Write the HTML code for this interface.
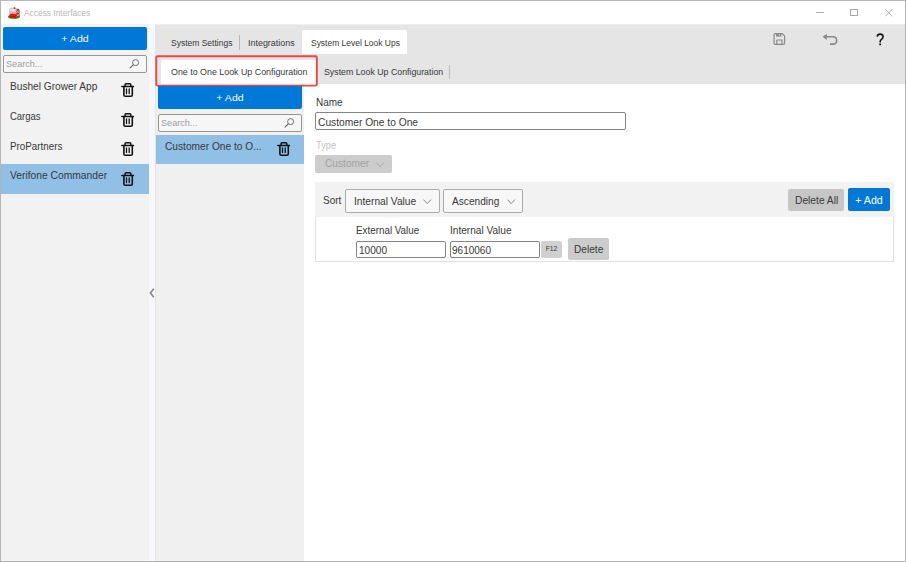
<!DOCTYPE html><html><head><meta charset="utf-8"><style>
html,body{margin:0;padding:0;}
body{width:906px;height:562px;position:relative;overflow:hidden;background:#fff;font-family:"Liberation Sans",sans-serif;}
.r{position:absolute;box-sizing:border-box;}
.t{position:absolute;white-space:nowrap;}
</style></head><body>
<div class="r" style="left:0px;top:0px;width:906px;height:562px;background:#ffffff;"></div>
<div class="r" style="left:1px;top:24px;width:148px;height:537px;background:#f2f2f2;"></div>
<div class="r" style="left:149px;top:24px;width:6px;height:537px;background:#f7f8fc;"></div>
<div class="r" style="left:155px;top:24px;width:1px;height:537px;background:#e3e3e8;"></div>
<div class="r" style="left:156px;top:25px;width:749px;height:59px;background:#e5e5e5;"></div>
<div class="r" style="left:156px;top:24px;width:749px;height:1px;background:#f0f0f0;"></div>
<div class="r" style="left:156px;top:84px;width:148px;height:477px;background:#f0f0f0;"></div>
<div class="r" style="left:304px;top:84px;width:601px;height:477px;background:#ffffff;"></div>
<div class="r" style="left:0px;top:0px;width:906px;height:1px;background:#b9b9b9;"></div>
<div class="r" style="left:0px;top:0px;width:1px;height:562px;background:#b4b4b4;"></div>
<div class="r" style="left:905px;top:0px;width:1px;height:562px;background:#b4b4b4;"></div>
<div class="r" style="left:0px;top:561px;width:906px;height:1px;background:#b4b4b4;"></div>
<svg class="r" style="left:6px;top:4px" width="18" height="18" viewBox="0 0 18 18">
<ellipse cx="8" cy="12.7" rx="6.1" ry="2.1" fill="#0e8a0e"/>
<ellipse cx="8" cy="12.5" rx="5.2" ry="1.4" fill="#19a019"/>
<path d="M10.1 5.2L12.2 4.6L13.6 6V12.6L10.1 13.4Z" fill="#b02525"/>
<path d="M10.5 6.2L13.2 9.2M10.5 9.2L13.2 6.2M10.5 9.8L13.2 12.6M10.5 12.6L13.2 9.8" stroke="#ecc8c8" stroke-width="0.7"/>
<rect x="3.6" y="9.4" width="6.6" height="4.1" fill="#ff1010"/>
<rect x="3.6" y="12.6" width="6.6" height="0.9" fill="#c00000"/>
<path d="M3.1 9.6V5.8Q3.3 3.9 5.4 3.7L10.6 3.9L10.3 9.6Z" fill="#c4c4c4"/>
<path d="M4.1 5.4Q4.6 4.5 6 4.5H9.4V7.4H4.1Z" fill="#e2e2e2"/>
<path d="M5.8 9.1H9.6" stroke="#a89a4a" stroke-width="0.6"/>
<circle cx="8.4" cy="4.1" r="0.95" fill="#e01818"/>
</svg>
<div class="t" style="top:7.53px;font-size:8.6px;line-height:11.18px;color:#b6b6b6;transform:scaleX(0.9757);left:24px;transform-origin:0 0;">Access Interfaces</div>
<div class="r" style="left:816px;top:11.7px;width:8px;height:1.0px;background:#b0b0b0;"></div>
<div class="r" style="left:850.3px;top:9px;width:7.7000000000000455px;height:7.399999999999999px;background:transparent;border:1px solid #a8a8a8;"></div>
<svg class="r" style="left:884.5px;top:9px" width="8" height="8" viewBox="0 0 8 8"><path d="M0.2 0.2L7.4 7.4M7.4 0.2L0.2 7.4" stroke="#a0a0a0" stroke-width="0.8"/></svg>
<div class="r" style="left:3px;top:26.5px;width:143.8px;height:23.5px;background:#0078d7;border-radius:2px;"></div>
<div class="t" style="top:32.83px;font-size:9.9px;line-height:12.87px;color:#ffffff;transform:scaleX(1.0703);left:3px;width:144px;text-align:center;">+ Add</div>
<div class="r" style="left:3px;top:55px;width:144px;height:18px;background:#f6f6f6;border:1px solid #979797;border-radius:2px;"></div>
<div class="t" style="top:58.13px;font-size:9.8px;line-height:12.74px;color:#a0a0a0;transform:scaleX(0.9286);left:5.8px;transform-origin:0 0;">Search...</div>
<svg class="r" style="left:128.5px;top:59px" width="11" height="10" viewBox="0 0 11 10"><circle cx="6.6" cy="3.6" r="3" fill="none" stroke="#626262" stroke-width="0.9"/><path d="M4.5 5.7L0.7 9.4" stroke="#626262" stroke-width="1.1"/></svg>
<div class="r" style="left:1px;top:164px;width:148px;height:30px;background:#91c0e7;"></div>
<div class="t" style="top:80.04px;font-size:10.3px;line-height:13.39px;color:#383838;transform:scaleX(0.9848);left:9.7px;transform-origin:0 0;">Bushel Grower App</div>
<svg class="r" style="left:121px;top:83.1px" width="14" height="15" viewBox="0 0 14 15"><g fill="none" stroke="#111" stroke-width="1.3" stroke-linecap="round"><path d="M0.8 3.5H12.5" stroke-width="1.4"/><path d="M4.1 3.2V1.7Q4.1 0.8 5 0.8H8.9Q9.8 0.8 9.8 1.7V3.2" stroke-width="1.5"/><path d="M2.9 3.8V11.9Q2.9 13.2 4.2 13.2H10Q11.3 13.2 11.3 11.9V3.8" stroke-width="1.6"/><path d="M5.5 6V10.5M8.2 6V10.5" stroke-width="1.3"/></g></svg>
<div class="t" style="top:110.04px;font-size:10.3px;line-height:13.39px;color:#383838;transform:scaleX(0.9187);left:9.7px;transform-origin:0 0;">Cargas</div>
<svg class="r" style="left:121px;top:112.6px" width="14" height="15" viewBox="0 0 14 15"><g fill="none" stroke="#111" stroke-width="1.3" stroke-linecap="round"><path d="M0.8 3.5H12.5" stroke-width="1.4"/><path d="M4.1 3.2V1.7Q4.1 0.8 5 0.8H8.9Q9.8 0.8 9.8 1.7V3.2" stroke-width="1.5"/><path d="M2.9 3.8V11.9Q2.9 13.2 4.2 13.2H10Q11.3 13.2 11.3 11.9V3.8" stroke-width="1.6"/><path d="M5.5 6V10.5M8.2 6V10.5" stroke-width="1.3"/></g></svg>
<div class="t" style="top:139.54px;font-size:10.3px;line-height:13.39px;color:#383838;transform:scaleX(0.9518);left:9.7px;transform-origin:0 0;">ProPartners</div>
<svg class="r" style="left:121px;top:142.1px" width="14" height="15" viewBox="0 0 14 15"><g fill="none" stroke="#111" stroke-width="1.3" stroke-linecap="round"><path d="M0.8 3.5H12.5" stroke-width="1.4"/><path d="M4.1 3.2V1.7Q4.1 0.8 5 0.8H8.9Q9.8 0.8 9.8 1.7V3.2" stroke-width="1.5"/><path d="M2.9 3.8V11.9Q2.9 13.2 4.2 13.2H10Q11.3 13.2 11.3 11.9V3.8" stroke-width="1.6"/><path d="M5.5 6V10.5M8.2 6V10.5" stroke-width="1.3"/></g></svg>
<div class="t" style="top:168.74px;font-size:10.3px;line-height:13.39px;color:#383838;transform:scaleX(0.9979);left:9.7px;transform-origin:0 0;">Verifone Commander</div>
<svg class="r" style="left:121px;top:171.6px" width="14" height="15" viewBox="0 0 14 15"><g fill="none" stroke="#111" stroke-width="1.3" stroke-linecap="round"><path d="M0.8 3.5H12.5" stroke-width="1.4"/><path d="M4.1 3.2V1.7Q4.1 0.8 5 0.8H8.9Q9.8 0.8 9.8 1.7V3.2" stroke-width="1.5"/><path d="M2.9 3.8V11.9Q2.9 13.2 4.2 13.2H10Q11.3 13.2 11.3 11.9V3.8" stroke-width="1.6"/><path d="M5.5 6V10.5M8.2 6V10.5" stroke-width="1.3"/></g></svg>
<div class="r" style="left:302px;top:30px;width:105px;height:24px;background:#ffffff;border-radius:2px 2px 0 0;"></div>
<div class="t" style="top:37.13px;font-size:9.7px;line-height:12.61px;color:#383838;transform:scaleX(0.8773);left:170.5px;transform-origin:0 0;">System Settings</div>
<div class="r" style="left:239px;top:35px;width:1px;height:15px;background:#b8b8b8;"></div>
<div class="t" style="top:37.13px;font-size:9.7px;line-height:12.61px;color:#383838;transform:scaleX(0.9211);left:248px;transform-origin:0 0;">Integrations</div>
<div class="t" style="top:37.13px;font-size:9.7px;line-height:12.61px;color:#383838;transform:scaleX(0.8734);left:311px;transform-origin:0 0;">System Level Look Ups</div>
<div class="r" style="left:161px;top:60px;width:155px;height:24px;background:#ffffff;border-radius:2px 2px 0 0;"></div>
<div class="t" style="top:66.23px;font-size:9.8px;line-height:12.74px;color:#383838;transform:scaleX(0.9046);left:170.5px;transform-origin:0 0;">One to One Look Up Configuration</div>
<div class="t" style="top:66.23px;font-size:9.8px;line-height:12.74px;color:#383838;transform:scaleX(0.8969);left:323.5px;transform-origin:0 0;">System Look Up Configuration</div>
<div class="r" style="left:449px;top:65px;width:1px;height:14px;background:#b8b8b8;"></div>
<svg class="r" style="left:150px;top:50px" width="175" height="42" viewBox="0 0 175 42"><rect x="6.25" y="6.25" width="160.6" height="29.4" rx="1.2" fill="none" stroke="#ef4747" stroke-width="1.9"/></svg>
<svg class="r" style="left:773px;top:33px" width="13" height="13" viewBox="0 0 13 13"><g fill="none" stroke="#8a8a8a" stroke-width="1.2">
<path d="M1.1 1.8Q1.1 0.7 2.2 0.7H9.2L11.6 3.1V10.2Q11.6 11.3 10.5 11.3H2.2Q1.1 11.3 1.1 10.2Z"/>
<path d="M3.8 7V11.2M3.8 7H9V11.2"/></g>
<rect x="3" y="0.8" width="5.3" height="2.8" fill="#8a8a8a"/><rect x="5.8" y="1.4" width="1" height="1.4" fill="#dcdcdc"/></svg>
<svg class="r" style="left:822px;top:33px" width="16" height="13" viewBox="0 0 16 13">
<path d="M0.7 3.8L4.8 0.7V6.9Z" fill="#888"/>
<path d="M4.5 3.8H11Q14.6 3.8 14.6 7.45Q14.6 11.1 11 11.1H8" fill="none" stroke="#888" stroke-width="1.6"/></svg>
<svg class="r" style="left:872px;top:30px" width="18" height="18" viewBox="0 0 18 18"><path d="M5.1 6.6Q5.6 4.1 8.1 4.1Q11.1 4.1 11.1 6.7Q11.1 8.3 9.5 9.4Q8.2 10.3 8.2 11.6V12.4" fill="none" stroke="#151515" stroke-width="1.55"/><rect x="7.2" y="13.5" width="1.9" height="1.7" rx="0.5" fill="#151515"/></svg>
<svg class="r" style="left:149px;top:288px" width="6" height="10" viewBox="0 0 6 10"><path d="M4.8 0.8L1.4 5L4.8 9.2" fill="none" stroke="#8a8a8a" stroke-width="1.7"/></svg>
<div class="r" style="left:158px;top:86.4px;width:144px;height:23.0px;background:#0078d7;border-radius:0 0 2px 2px;"></div>
<div class="t" style="top:92.23px;font-size:9.9px;line-height:12.87px;color:#ffffff;transform:scaleX(1.0703);left:158px;width:144px;text-align:center;">+ Add</div>
<div class="r" style="left:158px;top:114px;width:144px;height:18px;background:#f6f6f6;border:1px solid #979797;border-radius:2px;"></div>
<div class="t" style="top:117.43px;font-size:9.8px;line-height:12.74px;color:#a0a0a0;transform:scaleX(0.9286);left:161px;transform-origin:0 0;">Search...</div>
<svg class="r" style="left:284px;top:118px" width="11" height="10" viewBox="0 0 11 10"><circle cx="6.6" cy="3.6" r="3" fill="none" stroke="#626262" stroke-width="0.9"/><path d="M4.5 5.7L0.7 9.4" stroke="#626262" stroke-width="1.1"/></svg>
<div class="r" style="left:156px;top:135px;width:148px;height:29px;background:#91c0e7;"></div>
<div class="t" style="top:139.54px;font-size:10.6px;line-height:13.78px;color:#383838;transform:scaleX(0.9598);left:165px;transform-origin:0 0;">Customer One to O...</div>
<svg class="r" style="left:276.6px;top:142px" width="14" height="15" viewBox="0 0 14 15"><g fill="none" stroke="#111" stroke-width="1.3" stroke-linecap="round"><path d="M0.8 3.5H12.5" stroke-width="1.4"/><path d="M4.1 3.2V1.7Q4.1 0.8 5 0.8H8.9Q9.8 0.8 9.8 1.7V3.2" stroke-width="1.5"/><path d="M2.9 3.8V11.9Q2.9 13.2 4.2 13.2H10Q11.3 13.2 11.3 11.9V3.8" stroke-width="1.6"/><path d="M5.5 6V10.5M8.2 6V10.5" stroke-width="1.3"/></g></svg>
<div class="t" style="top:95.94px;font-size:10.5px;line-height:13.65px;color:#383838;transform:scaleX(0.9500);left:315.7px;transform-origin:0 0;">Name</div>
<div class="r" style="left:315px;top:111.7px;width:311px;height:17.999999999999986px;background:#ffffff;border:1px solid #858585;border-radius:2px;"></div>
<div class="t" style="top:115.64px;font-size:10.5px;line-height:13.65px;color:#383838;transform:scaleX(0.9737);left:317.8px;transform-origin:0 0;">Customer One to One</div>
<div class="t" style="top:139.34px;font-size:10.2px;line-height:13.26px;color:#c2c2c2;transform:scaleX(0.9140);left:316px;transform-origin:0 0;">Type</div>
<div class="r" style="left:315px;top:155px;width:77px;height:18px;background:#cccccc;border-radius:2px;"></div>
<div class="t" style="top:156.84px;font-size:10.5px;line-height:13.65px;color:#a3a3a3;transform:scaleX(0.9670);left:324.5px;transform-origin:0 0;">Customer</div>
<svg class="r" style="left:376.3px;top:161.8px" width="9" height="6" viewBox="0 0 9 6"><path d="M0.4 0.6L4.2 4.6L8 0.6" fill="none" stroke="#a3a3a3" stroke-width="0.9"/></svg>
<div class="r" style="left:315px;top:182px;width:579px;height:35px;background:#f2f2f2;"></div>
<div class="r" style="left:315px;top:217px;width:579px;height:45px;background:#ffffff;border:1px solid #e2e2e2;border-top:none;"></div>
<div class="t" style="top:194.14px;font-size:10.5px;line-height:13.65px;color:#383838;transform:scaleX(0.9506);left:322.7px;transform-origin:0 0;">Sort</div>
<div class="r" style="left:345px;top:189px;width:95px;height:24px;background:#f7f7f7;border:1px solid #acacac;border-radius:2px;"></div>
<div class="t" style="top:195.04px;font-size:10.5px;line-height:13.65px;color:#383838;transform:scaleX(0.9719);left:353.8px;transform-origin:0 0;">Internal Value</div>
<svg class="r" style="left:423.4px;top:198.9px" width="9" height="6" viewBox="0 0 9 6"><path d="M0.4 0.6L4.2 4.6L8 0.6" fill="none" stroke="#777" stroke-width="0.9"/></svg>
<div class="r" style="left:443px;top:189px;width:80px;height:24px;background:#f7f7f7;border:1px solid #acacac;border-radius:2px;"></div>
<div class="t" style="top:195.04px;font-size:10.5px;line-height:13.65px;color:#383838;transform:scaleX(0.9643);left:452.3px;transform-origin:0 0;">Ascending</div>
<svg class="r" style="left:507.2px;top:198.9px" width="9" height="6" viewBox="0 0 9 6"><path d="M0.4 0.6L4.2 4.6L8 0.6" fill="none" stroke="#777" stroke-width="0.9"/></svg>
<div class="r" style="left:788px;top:189px;width:56px;height:22px;background:#c6c6c6;border-radius:2px;"></div>
<div class="t" style="top:193.64px;font-size:10.5px;line-height:13.65px;color:#383838;transform:scaleX(0.9741);left:794.8px;transform-origin:0 0;">Delete All</div>
<div class="r" style="left:848px;top:188px;width:42px;height:23px;background:#0078d7;border-radius:2px;"></div>
<div class="t" style="top:194.04px;font-size:10.2px;line-height:13.26px;color:#ffffff;transform:scaleX(1.0455);left:848px;width:42px;text-align:center;">+ Add</div>
<div class="t" style="top:223.54px;font-size:10.5px;line-height:13.65px;color:#383838;transform:scaleX(0.9363);left:356.3px;transform-origin:0 0;">External Value</div>
<div class="t" style="top:223.54px;font-size:10.5px;line-height:13.65px;color:#383838;transform:scaleX(0.9609);left:450px;transform-origin:0 0;">Internal Value</div>
<div class="r" style="left:356px;top:241px;width:90px;height:17px;background:#ffffff;border:1px solid #858585;border-radius:2px;"></div>
<div class="t" style="top:243.74px;font-size:10.5px;line-height:13.65px;color:#383838;transform:scaleX(0.9623);left:358.6px;transform-origin:0 0;">10000</div>
<div class="r" style="left:450px;top:241px;width:90px;height:17px;background:#ffffff;border:1px solid #858585;border-radius:2px;"></div>
<div class="t" style="top:243.74px;font-size:10.5px;line-height:13.65px;color:#383838;transform:scaleX(0.9535);left:452.3px;transform-origin:0 0;">9610060</div>
<div class="r" style="left:541px;top:240.5px;width:21px;height:17.0px;background:#d0d0d0;border-radius:2px;"></div>
<div class="t" style="top:245.42px;font-size:6.8px;line-height:8.84px;color:#383838;left:541px;width:21px;text-align:center;">F12</div>
<div class="r" style="left:568px;top:238px;width:41px;height:22px;background:#cccccc;border-radius:2px;"></div>
<div class="t" style="top:243.34px;font-size:10.5px;line-height:13.65px;color:#383838;transform:scaleX(0.9654);left:574px;transform-origin:0 0;">Delete</div>
</body></html>
